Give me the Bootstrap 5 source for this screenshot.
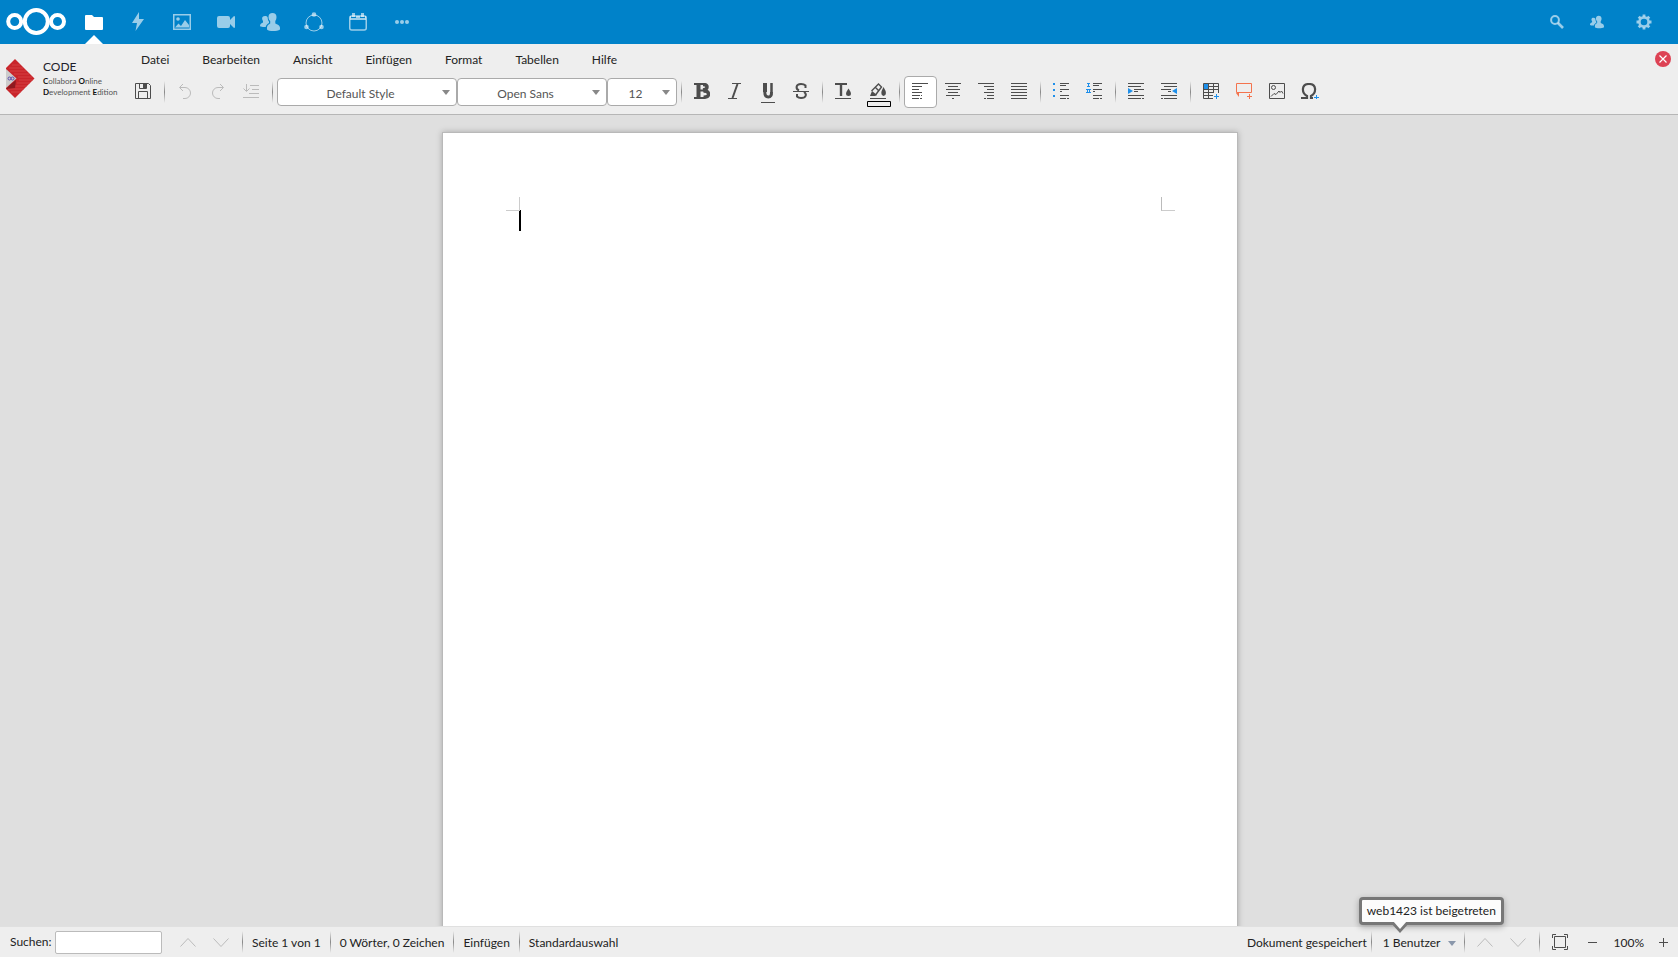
<!DOCTYPE html>
<html lang="de">
<head>
<meta charset="utf-8">
<meta name="viewport" content="width=device-width, initial-scale=1">
<title>Dokument – Collabora Online</title>
<link href="https://cdn.jsdelivr.net/npm/bootstrap@5.3.0/dist/css/bootstrap.min.css" rel="stylesheet">
<style>
  body { font-family: Lato, "Open Sans", sans-serif; font-size: 12px; line-height: 18px; color: #222; background: #dfdfdf; }
  svg { display: block; flex: none; }
  button, .app-link { border: 0; background: none; padding: 0; color: inherit; flex: none; }

  .topbar { height: 44px; background: #0082c9; color: #fff; flex: none; }
  .topbar-end { padding-right: 12px; }
  .brand-logo { width: 72px; padding-left: 6px; }
  .app-link { width: 44px; height: 44px; color: rgba(255,255,255,.6); }
  .app-link:hover, .app-link.active { color: #fff; }
  .app-link.active::after { content: ""; position: absolute; left: 50%; bottom: 0; margin-left: -9px; border: 9px solid transparent; border-top: 0; border-bottom-color: #fff; }
  .narrow-link { width: 35px; }

  .editor-head { height: 71px; background: #eee; border-bottom: 1px solid #b6b6b6; flex: none; }
  .product { width: 127px; padding: 15px 0 0 6px; gap: 8px; color: #1d1d2b; }
  .product-name { line-height: 16px; margin-bottom: 1px; }
  .product-sub { font-size: 8px; line-height: 11px; color: #555; white-space: nowrap; }
  .product-sub b { color: #111; }
  .menu-item { color: #222; text-decoration: none; padding: 7px 17px 0 16px; }
  .menu-first { margin-left: -2px; }
  .tool { width: 33px; height: 32px; display: flex; align-items: center; justify-content: center; color: #4d4d4d; border-radius: 4px; padding: 0 1px 2px 0; }
  .tool.off { color: #bbb; }
  .tool.on { background: #fff; border: 1px solid #aaa; }
  .tool-wide { width: 35px; }
  .rule { width: 9px; flex: none; height: 22px; background: linear-gradient(#eee, #888, #eee) center / 1px 100% no-repeat; }
  .pick { position: relative; flex: none; }
  .pick select { appearance: none; width: 100%; height: 28px; padding: 3px 18px 0 5px; border: 1px solid #aaa; border-radius: 4px; background: #fff; color: #555; text-align-last: center; display: block; }
  .pick::after { content: ""; position: absolute; right: 7px; top: 12px; border: 4px solid transparent; border-top: 5px solid #888; border-bottom: 0; pointer-events: none; }
  .w-style { width: 180px; } .w-font { width: 150px; } .w-size { width: 70px; }
  .toolrow { padding-top: 7px; }
  .close-btn { margin: 7px 7px 0 0; }

  .canvas { background: #dfdfdf; padding: 17px 0 0 2px; overflow: hidden; min-height: 0; }
  .sheet { width: 796px; min-height: 1123px; background: #fff; border: 1px solid #b9b9b9; box-shadow: 0 0 6px rgba(0,0,0,.25); padding: 64px 62px 64px 63px; }
  .mark-l, .mark-r { width: 14px; height: 14px; border-bottom: 1px solid #ccc; }
  .mark-l { border-right: 1px solid #ccc; } .mark-r { border-left: 1px solid #bbb; }
  .caret { width: 2px; height: 21px; background: #000; margin: -1px 0 0 13px; }

  .statusbar { height: 31px; background: #eee; border-top: 1px solid #e0e0e0; flex: none; white-space: nowrap; }
  .statusbar .cell { padding: 2px 5px 0; }
  .statusbar .tool { height: 28px; padding-bottom: 0; }
  .statusbar .users { padding: 2px 4px 0 7px; }
  .statusbar .tool-end { width: 30px; padding: 0; }
  .find-label { width: 55px; padding-left: 10px; flex: none; }
  .search-box { width: 107px; height: 23px; border: 1px solid #bbb; border-radius: 2px; background: #fff; padding: 0 4px; margin-right: 10px; }
  .tri { border: 4px solid transparent; border-top: 5px solid #8a97ab; border-bottom: 0; margin-left: 7px; }
  .bubble { position: absolute; left: -17px; bottom: 27px; background: #fcfcfc; border: 3px solid #777; border-radius: 4px; padding: 2px 5px; box-shadow: 0 2px 6px rgba(0,0,0,.3); }
  .bubble svg { position: absolute; left: 28px; top: 100%; margin-top: -1px; }
</style>
</head>
<body class="vh-100 d-flex flex-column overflow-hidden">

<header class="topbar d-flex align-items-center">
  <a href="#" class="brand-logo" aria-label="Nextcloud">
    <svg width="61" height="30" viewBox="0 0 61 30" fill="none" stroke="#fff" stroke-width="4"><circle cx="30.300" cy="14.500" r="11.500"/><circle cx="8.700" cy="14.500" r="6.500"/><circle cx="51.500" cy="14.500" r="6.500"/></svg>
  </a>
  <nav class="d-flex">
    <a href="#" class="app-link active position-relative d-flex align-items-center justify-content-center" aria-label="Dateien"><svg width="18" height="16" viewBox="0 0 18 16" fill="currentColor"><path d="M1 1h6l2 2h8a1 1 0 0 1 1 1v11a1 1 0 0 1-1 1H1a1 1 0 0 1-1-1V2a1 1 0 0 1 1-1z"/></svg></a>
    <a href="#" class="app-link d-flex align-items-center justify-content-center" aria-label="Aktivität"><svg width="14" height="20" viewBox="0 0 14 20" fill="currentColor"><path d="M8 0 1 11h5L4.500 19 13 7H8z"/></svg></a>
    <a href="#" class="app-link d-flex align-items-center justify-content-center" aria-label="Fotos"><svg width="18" height="16" viewBox="0 0 18 16"><path fill="none" stroke="currentColor" stroke-width="1.500" d="M.75.75h16.500v14.500H.75z"/><circle cx="5" cy="5" r="1.800" fill="currentColor"/><path fill="currentColor" d="m2 13.500 3.500-4L8 12l4-6 4 5v2.500z"/></svg></a>
    <a href="#" class="app-link d-flex align-items-center justify-content-center" aria-label="Videoanrufe"><svg width="18" height="14" viewBox="0 0 18 14" fill="currentColor"><path d="M2 1h9q2 0 2 2v2l4-4q1 0 1 1v10q0 1-1 1l-4-4v2q0 2-2 2H2q-2 0-2-2V3q0-2 2-2z"/></svg></a>
    <a href="#" class="app-link d-flex align-items-center justify-content-center" aria-label="Kontakte"><svg width="20" height="18" viewBox="0 0 20 18" fill="currentColor"><path d="M12.500 0c2.500 0 4 1.600 4 4 0 2-.6 3-1.200 4v2.500c1.700 1 4.700 1.500 4.700 4.500v1.500c-3 2-11 2-13 0V15c0-3 2-3.500 3.200-4.500V8C9.200 7 8.500 6 8.500 4c0-2.400 1.500-4 4-4zM5 3c1.200 0 2.200.5 2.700 1.400 0 2 .6 3.200 1.300 4.200V10c-1.700 1-3 2-3.300 4-2 .2-4.500 0-5.700-.7 0-2.300.8-2.800 3-3.800V8C1.500 6 1.700 3 5 3z"/></svg></a>
    <a href="#" class="app-link d-flex align-items-center justify-content-center" aria-label="Kreise"><svg width="20" height="20" viewBox="0 0 20 20"><circle cx="10" cy="11" r="8" fill="none" stroke="currentColor" stroke-width="1"/><g fill="currentColor"><circle cx="10" cy="2.500" r="2.300"/><circle cx="2.500" cy="15" r="2.300"/><circle cx="17.500" cy="15" r="2.300"/></g></svg></a>
    <a href="#" class="app-link d-flex align-items-center justify-content-center" aria-label="Kalender"><svg width="18" height="18" viewBox="0 0 18 18"><rect x=".75" y="3" width="16.500" height="14" rx="2" fill="none" stroke="currentColor" stroke-width="1.500"/><path fill="currentColor" d="M3 0h3v4H3zm9 0h3v4h-3zM1 3h1v2h5V3h4v2h5V3h1v4H1z"/></svg></a>
    <a href="#" class="app-link d-flex align-items-center justify-content-center" aria-label="Mehr"><svg width="14" height="4" viewBox="0 0 14 4" fill="currentColor"><circle cx="2" cy="2" r="2"/><circle cx="7" cy="2" r="2"/><circle cx="12" cy="2" r="2"/></svg></a>
  </nav>
  <div class="topbar-end d-flex ms-auto">
    <a href="#" class="app-link d-flex align-items-center justify-content-center" aria-label="Suche"><svg width="14" height="14" viewBox="0 0 14 14" fill="none" stroke="currentColor"><circle cx="5" cy="5" r="3.900" stroke-width="2"/><path stroke-width="2.600" d="m8 8 5 5"/></svg></a>
    <a href="#" class="app-link narrow-link d-flex align-items-center justify-content-center" aria-label="Kontaktmenü"><svg width="14" height="14" viewBox="0 0 20 18" fill="currentColor"><path d="M12.500 0c2.500 0 4 1.600 4 4 0 2-.6 3-1.200 4v2.500c1.700 1 4.700 1.500 4.700 4.500v1.500c-3 2-11 2-13 0V15c0-3 2-3.500 3.200-4.500V8C9.200 7 8.500 6 8.500 4c0-2.400 1.500-4 4-4zM5 3c1.200 0 2.200.5 2.700 1.400 0 2 .6 3.200 1.300 4.200V10c-1.700 1-3 2-3.300 4-2 .2-4.500 0-5.700-.7 0-2.300.8-2.800 3-3.800V8C1.500 6 1.700 3 5 3z"/></svg></a>
    <a href="#" class="app-link ms-2 d-flex align-items-center justify-content-center" aria-label="Einstellungen"><svg width="16" height="16" viewBox="0 0 16 16" fill="none" stroke="currentColor"><circle cx="8" cy="8" r="4.600" stroke-width="2.600"/><path stroke-width="2.800" d="M8 .5v2M8 13.500v2M.5 8h2M13.500 8h2M2.700 2.700l1.400 1.400M11.900 11.900l1.400 1.400M2.700 13.300l1.400-1.400M11.900 4.100l1.400-1.400"/></svg></a>
  </div>
</header>

<div class="editor-head d-flex">
  <div class="product d-flex flex-shrink-0">
    <svg width="29" height="40" viewBox="0 0 29 40"><path fill="#c9252b" d="M9 0 28.500 19.500 9 39 0 30V9z"/><path stroke="#d84a4c" stroke-width=".7" d="M6 6h8M3 9h14M4 12h16M8 15h15M12 18h14M13 21h14M11 24h13M6 27h15M2 30h16M5 33h10"/><path fill="#ccc" d="M0 10 10.500 19.500 0 29z"/><path fill="#8e1a20" d="m4 26 6-5-1 8-9 1z"/><path fill="none" stroke="#5b4fb0" d="M2 19.500a1.500 1.500 0 1 0 3 0 1.500 1.500 0 1 1 3 0 1.500 1.500 0 1 1-3 0 1.500 1.500 0 1 0-3 0z"/></svg>
    <div>
      <div class="product-name">CODE</div>
      <div class="product-sub"><b>C</b>ollabora <b>O</b>nline</div>
      <div class="product-sub"><b>D</b>evelopment <b>E</b>dition</div>
    </div>
  </div>
  <div class="flex-grow-1">
    <nav class="d-flex">
      <a href="#" class="menu-item menu-first">Datei</a><a href="#" class="menu-item">Bearbeiten</a><a href="#" class="menu-item">Ansicht</a><a href="#" class="menu-item">Einfügen</a><a href="#" class="menu-item">Format</a><a href="#" class="menu-item">Tabellen</a><a href="#" class="menu-item">Hilfe</a>
    </nav>
    <div class="toolrow d-flex align-items-center" role="toolbar">
      <button class="tool" aria-label="Speichern"><svg width="16" height="16" fill="none" stroke="currentColor"><path d="M.5.5h13l2 2v13H.5zM3.500 15V8.500h9V15M4.500 1v4.500h7V1"/><path fill="currentColor" stroke="none" d="M8 0h3v5H8z"/></svg></button>
      <span class="rule"></span>
      <button class="tool off" aria-label="Rückgängig"><svg width="14" height="16" fill="none" stroke="currentColor"><path d="M5 1 1.500 4.500 5 8M2 4.500h5a5 5 0 0 1 0 11H5"/></svg></button>
      <button class="tool off" aria-label="Wiederherstellen"><svg width="14" height="16" fill="none" stroke="currentColor"><path d="m9 1 3.500 3.500L9 8m3-3.500H7a5 5 0 0 0 0 11h2"/></svg></button>
      <button class="tool off" aria-label="Wiederholen"><svg width="16" height="16" fill="none" stroke="currentColor"><path d="M3.500 1v7M.5 5.500l3 3 3-3M7 2.500h9M9 6.500h7M6 10.500h10M0 14.500h16"/></svg></button>
      <span class="rule"></span>
      <div class="pick w-style"><select aria-label="Absatzvorlage"><option>Default Style</option></select></div>
      <div class="pick w-font"><select aria-label="Schriftart"><option>Open Sans</option></select></div>
      <div class="pick w-size"><select aria-label="Schriftgröße"><option>12</option></select></div>
      <span class="rule"></span>
      <button class="tool" aria-label="Fett"><svg width="16" height="16" fill="none" stroke="currentColor"><path stroke-width="2" d="M0 1h9M0 15h10"/><path stroke-width="4" d="M4.500 1v14"/><path stroke-width="2" d="M6 7.500h4"/><path stroke-width="3.500" d="M9 1.500q4 0 4 2.500t-4 3M9.500 8q5 0 5 3.200T9.500 14.300"/></svg></button>
      <button class="tool" aria-label="Kursiv"><svg width="16" height="16" fill="none" stroke="currentColor"><path d="M5 .5h9M1 15.500h9"/><path stroke-width="2" d="m10.500 1-5 14"/></svg></button>
      <button class="tool" aria-label="Unterstrichen"><svg class="mt-1" width="14" height="20" fill="none" stroke="currentColor"><path stroke-width="4" d="M4 0v9"/><path stroke-width="2.500" d="M10.500 0v9"/><path stroke-width="3" d="M3.800 9q0 5 3.500 5T10.500 9"/><path d="M0 19.500h14"/></svg></button>
      <button class="tool" aria-label="Durchgestrichen"><svg width="16" height="16" fill="none" stroke="currentColor"><path stroke-width="2" d="M12.500 5V2.500Q11 1 8 1C2.500 1 2.500 6 6 7.500M4 11v2.500Q5.500 15 8 15c5.500 0 6-4 3-6"/><path d="M0 8.500h16"/></svg></button>
      <span class="rule"></span>
      <button class="tool" aria-label="Schriftfarbe"><svg width="16" height="16" fill="none" stroke="currentColor"><path stroke-width="2" d="M0 1h12"/><path stroke-width="2.400" d="M6 1v12"/><path d="M0 15.500h16"/><path fill="currentColor" stroke="none" d="M13.500 5.500q5 7 0 7.500-5-.5 0-7.500z"/></svg></button>
      <button class="tool tool-wide" aria-label="Hervorhebungsfarbe"><svg class="mt-2 ms-1" width="24" height="24" fill="none" stroke="currentColor"><path fill="currentColor" stroke="none" d="m3 13 2-5 5 4-2 1z"/><path stroke-width="1.400" d="m4.500 8 7-7 3 3-6 8M8 4l4 4"/><path fill="currentColor" stroke="none" d="M16.500 4q5 8 0 9-4.500-1 0-9z"/><path d="M3 15.500h16"/><path stroke="#000" fill="#eee" d="M.5 18.500h23v5H.5z"/></svg></button>
      <span class="rule"></span>
      <button class="tool on" aria-label="Linksbündig"><svg width="16" height="16" stroke="currentColor"><path d="M0 .5h16M0 3.500h10M0 6.500h7M0 9.500h10M0 12.500h8M9 12.500h1M0 15.500h7M8 15.500h2"/></svg></button>
      <button class="tool" aria-label="Zentriert"><svg width="16" height="16" stroke="currentColor"><path d="M0 .5h16M3 3.500h10M1 6.500h14M3 9.500h10M1 12.500h14M7 15.500h2"/></svg></button>
      <button class="tool" aria-label="Rechtsbündig"><svg width="16" height="16" stroke="currentColor"><path d="M0 .5h16M6 3.500h10M9 6.500h7M6 9.500h10M9 12.500h7M6 15.500h2M9 15.500h7"/></svg></button>
      <button class="tool" aria-label="Blocksatz"><svg width="16" height="16" stroke="currentColor"><path d="M0 .5h16M0 3.500h16M0 6.500h16M0 9.500h16M0 12.500h16M0 15.500h16"/></svg></button>
      <span class="rule"></span>
      <button class="tool" aria-label="Aufzählung"><svg width="16" height="16" stroke="currentColor"><path d="M7 .5h9M7 2.500h6M7 6.500h9M7 8.500h2M7 12.500h9M7 15.500h6M14 15.500h2"/><path stroke="#1e8fea" stroke-width="2" d="M0 1h2M0 7h2M0 13h2"/></svg></button>
      <button class="tool" aria-label="Nummerierung"><svg width="16" height="16" stroke="currentColor"><path d="M7 .5h9M7 2.500h6M7 6.500h9M7 8.500h2M7 12.500h9M7 15.500h6M14 15.500h2"/><path stroke="#1e8fea" d="M1 .5h3M2.500 0v4M1 3.500h3M0 6.500h5M0 9.500h5M1.500 6v4M3.500 6v4"/></svg></button>
      <span class="rule"></span>
      <button class="tool" aria-label="Einzug vergrößern"><svg width="16" height="16" stroke="currentColor"><path d="M0 .5h16M0 3.500h13M6 6.500h10M6 8.500h4M0 12.500h16M0 15.500h13M14 15.500h2"/><path fill="#1e8fea" stroke="none" d="M0 5v6l5-3z"/></svg></button>
      <button class="tool" aria-label="Einzug verkleinern"><svg width="16" height="16" stroke="currentColor"><path d="M0 .5h16M3 3.500h13M0 6.500h10M7 8.500h3M0 12.500h16M0 15.500h2M3 15.500h13"/><path fill="#1e8fea" stroke="none" d="M16 5v6l-5-3z"/></svg></button>
      <span class="rule"></span>
      <button class="tool" aria-label="Tabelle einfügen"><svg width="16" height="16" fill="none" stroke="currentColor"><path fill="#1e8fea" stroke="none" d="M1 1h4v5H1z"/><path d="M15.500 10V.5H.5v15H10M5.500 0v16M10.500 0v10M0 6.500h16M5 3.500h11M0 9.500h10M0 12.500h10"/><path stroke="#1e8fea" d="M11 13.500h5M13.500 11v5"/></svg></button>
      <button class="tool" aria-label="Kommentar einfügen"><svg width="16" height="16" fill="none" stroke="#f4734d"><path d="M.5.5h15v9H.5zM11 13.500h5M13.500 11v5"/><path fill="#f4734d" stroke="none" d="M0 10h3v4z"/></svg></button>
      <button class="tool" aria-label="Bild einfügen"><svg width="16" height="16" fill="none" stroke="currentColor"><path d="M.5.500h15v15H.5zM2 13.500l3-3 2 1 3-3.500 1 1.500L12.500 8l1.500 2.500"/><circle cx="4.500" cy="4.500" r="2"/></svg></button>
      <button class="tool" aria-label="Sonderzeichen einfügen"><svg width="18" height="16" fill="none" stroke="currentColor"><path stroke-width="2.200" d="M0 15h6v-2C.5 10 0 1 8 1s7.500 9 2 12v2h2"/><path stroke="#1e8fea" d="M13 14.500h5M15.500 12v4"/></svg></button>
    </div>
  </div>
  <button class="close-btn align-self-start" aria-label="Schließen"><svg width="16" height="16"><circle cx="8" cy="8" r="8" fill="#dd4254"/><path stroke="#fff" stroke-width="1.200" d="m4.500 4.500 7 7m0-7-7 7"/></svg></button>
</div>

<main class="canvas flex-grow-1">
  <div class="sheet mx-auto">
    <div class="d-flex justify-content-between"><span class="mark-l"></span><span class="mark-r"></span></div>
    <div class="caret"></div>
  </div>
</main>

<footer class="statusbar d-flex align-items-center">
  <label for="find" class="find-label">Suchen:</label>
  <input id="find" type="text" class="search-box">
  <button class="tool off" aria-label="Vorheriger Treffer"><svg width="16" height="9" fill="none" stroke="currentColor"><path d="m.5 8.500 7.500-8 7.500 8"/></svg></button>
  <button class="tool off" aria-label="Nächster Treffer"><svg width="16" height="9" fill="none" stroke="currentColor"><path d="m.5.5 7.500 8 7.500-8"/></svg></button>
  <span class="rule"></span>
  <span class="cell">Seite 1 von 1</span><span class="rule"></span>
  <span class="cell">0 Wörter, 0 Zeichen</span><span class="rule"></span>
  <span class="cell">Einfügen</span><span class="rule"></span>
  <span class="cell">Standardauswahl</span>
  <span class="cell ms-auto pe-0">Dokument gespeichert</span><span class="rule"></span>
  <div class="position-relative">
    <button class="users d-flex align-items-center">1 Benutzer<span class="tri"></span></button>
    <div class="bubble" role="status">web1423 ist beigetreten<svg width="20" height="12"><path fill="#777" d="M0 1h20L10 12z"/><path fill="#fcfcfc" d="M3 0h14l-7 8z"/></svg></div>
  </div>
  <span class="rule"></span>
  <button class="tool off" aria-label="Vorherige Seite"><svg width="16" height="9" fill="none" stroke="currentColor"><path d="m.5 8.500 7.500-8 7.500 8"/></svg></button>
  <button class="tool off" aria-label="Nächste Seite"><svg width="16" height="9" fill="none" stroke="currentColor"><path d="m.5.5 7.500 8 7.500-8"/></svg></button>
  <span class="rule"></span>
  <button class="tool" aria-label="Seite einpassen"><svg width="16" height="16" fill="none" stroke="currentColor"><path d="M2.500 2.500h11v11h-11zM.5 4V.5H4M12 .5h3.500V4M15.500 12v3.500H12M4 15.500H.5V12"/></svg></button>
  <button class="tool" aria-label="Verkleinern"><svg width="9" height="9" stroke="currentColor"><path d="M0 4.500h9"/></svg></button>
  <span class="cell px-1">100%</span>
  <button class="tool tool-end" aria-label="Vergrößern"><svg width="9" height="9" stroke="currentColor"><path d="M0 4.500h9M4.500 0v9"/></svg></button>
</footer>

<script src="https://cdn.jsdelivr.net/npm/bootstrap@5.3.0/dist/js/bootstrap.bundle.min.js"></script>
</body>
</html>
